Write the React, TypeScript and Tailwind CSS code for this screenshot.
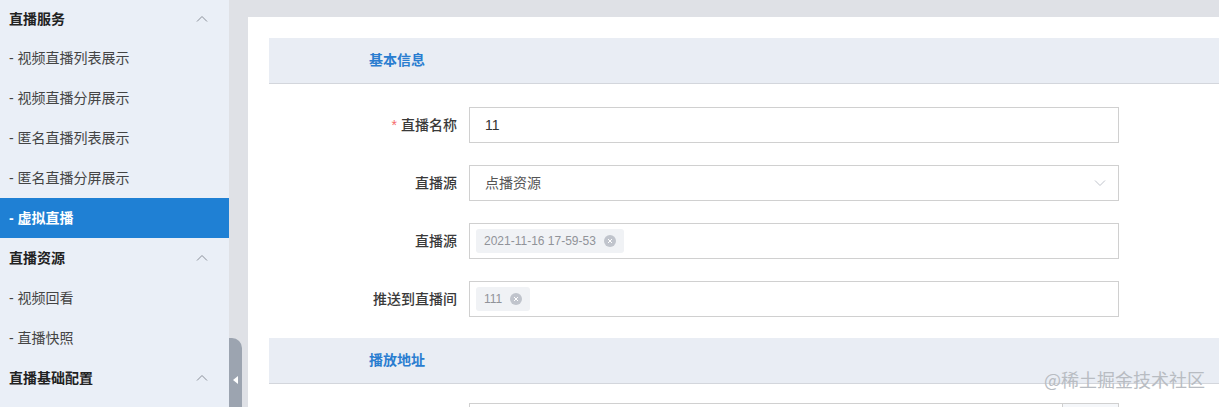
import React from "react";

const font = { fontFamily: '"Liberation Sans", "Noto Sans CJK SC", sans-serif' };

function ChevronUp() {
  return (
    <svg width="12" height="8" viewBox="0 0 12 8" fill="none" stroke="#8a8f99" strokeWidth="1">
      <path d="M1 6.5 L6 1.5 L11 6.5" />
    </svg>
  );
}

function ChevronDown() {
  return (
    <svg width="12" height="8" viewBox="0 0 12 8" fill="none" stroke="#c0c4cc" strokeWidth="1">
      <path d="M1 1.5 L6 6.5 L11 1.5" />
    </svg>
  );
}

function CloseDot() {
  return (
    <span className="ml-[8px] inline-flex h-[12px] w-[12px] items-center justify-center rounded-full bg-[#c0c4cc]">
      <svg width="6" height="6" viewBox="0 0 6 6" stroke="#ffffff" strokeWidth="1">
        <path d="M1 1 L5 5 M5 1 L1 5" />
      </svg>
    </span>
  );
}

function GroupHeader({ title, first }: { title: string; first?: boolean }) {
  return (
    <div
      className={
        (first ? "h-[38px] " : "h-[40px] ") +
        "flex items-center justify-between pl-[9px] pr-[21px] text-[14px] font-bold text-[#222]"
      }
    >
      <span>{title}</span>
      <ChevronUp />
    </div>
  );
}

function Item({ title, active }: { title: string; active?: boolean }) {
  return (
    <div
      className={
        active
          ? "flex h-[40px] items-center bg-[#1f80d4] pl-[9px] text-[14px] font-bold text-white"
          : "flex h-[40px] items-center pl-[9px] text-[14px] text-[#444]"
      }
    >
      - {title}
    </div>
  );
}

function SectionHeader({ title }: { title: string }) {
  return (
    <div className="flex h-[46px] items-center border-b border-[#d3d6dc] bg-[#e9edf4] pl-[100px] text-[14px] font-bold text-[#2a7dd0]">
      {title}
    </div>
  );
}

function Row({ label, required, children }: { label: string; required?: boolean; children: React.ReactNode }) {
  return (
    <div className="flex items-center">
      <div className="flex w-[200px] items-center justify-end pr-[12px] text-[14px] font-medium text-[#3a3a3a]">
        {required && <span className="mr-[4px] text-[#f56c6c]">*</span>}
        {label}
      </div>
      {children}
    </div>
  );
}

export default function App() {
  return (
    <div className="relative flex h-[407px] w-[1219px] overflow-hidden" style={font}>
      <aside className="w-[229px] shrink-0 bg-[#eaeff7]">
        <GroupHeader title="直播服务" first />
        <Item title="视频直播列表展示" />
        <Item title="视频直播分屏展示" />
        <Item title="匿名直播列表展示" />
        <Item title="匿名直播分屏展示" />
        <Item title="虚拟直播" active />
        <GroupHeader title="直播资源" />
        <Item title="视频回看" />
        <Item title="直播快照" />
        <GroupHeader title="直播基础配置" />
      </aside>
      <div className="relative w-[19px] shrink-0 bg-[#dfe1e6]">
        <div className="absolute left-0 top-[338px] flex h-[80px] w-[13px] items-start justify-center rounded-tr-[10px] bg-[#9ca4b0] pt-[38px]">
          <svg width="5" height="8" viewBox="0 0 5 8">
            <path d="M5 0 L0 4 L5 8 Z" fill="#ffffff" />
          </svg>
        </div>
      </div>
      <main className="flex-1 bg-[#dfe1e6] pt-[17px]">
        <div className="h-full bg-white pl-[21px] pt-[21px]">
          <SectionHeader title="基本信息" />
          <div className="flex flex-col gap-[22px] pt-[23px] pb-[21px]">
            <Row label="直播名称" required>
              <div className="flex h-[36px] w-[650px] items-center border border-[#d0d0d0] px-[15px] text-[14px] text-[#333]">
                11
              </div>
            </Row>
            <Row label="直播源">
              <div className="flex h-[36px] w-[650px] items-center justify-between border border-[#d0d0d0] pl-[15px] pr-[12px] text-[14px] text-[#555]">
                <span>点播资源</span>
                <ChevronDown />
              </div>
            </Row>
            <Row label="直播源">
              <div className="flex h-[36px] w-[650px] items-center border border-[#d0d0d0] px-[6px]">
                <span className="inline-flex h-[24px] items-center rounded-[3px] bg-[#f0f2f5] px-[8px] text-[12px] text-[#909399]">
                  2021-11-16 17-59-53
                  <CloseDot />
                </span>
              </div>
            </Row>
            <Row label="推送到直播间">
              <div className="flex h-[36px] w-[650px] items-center border border-[#d0d0d0] px-[6px]">
                <span className="inline-flex h-[24px] items-center rounded-[3px] bg-[#f0f2f5] px-[8px] text-[12px] text-[#909399]">
                  111
                  <CloseDot />
                </span>
              </div>
            </Row>
          </div>
          <SectionHeader title="播放地址" />
          <div className="pt-[19px]">
            <div className="flex">
              <div className="w-[200px]" />
              <div className="flex h-[36px] w-[650px]">
                <div className="flex-1 border border-[#d0d0d0]" />
                <div className="w-[56px] border border-l-0 border-[#d0d0d0] bg-[#f5f7fa]" />
              </div>
            </div>
          </div>
        </div>
      </main>
      <div
        className="pointer-events-none absolute left-[1044px] top-[366px] text-[18px] text-[#b8bcc2]"
        style={{ fontFamily: '"Noto Sans CJK SC", sans-serif' }}
      >
        @稀土掘金技术社区
      </div>
    </div>
  );
}
